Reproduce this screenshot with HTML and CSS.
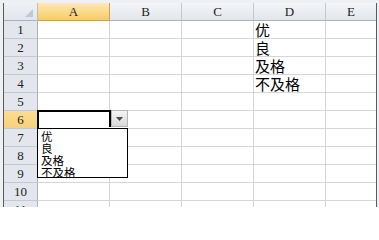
FILE: index.html
```html
<!DOCTYPE html>
<html lang="zh">
<head>
<meta charset="utf-8">
<title>Sheet</title>
<link rel="stylesheet" href="styles.css">
</head>
<body>
<div class="frame">
  <div class="grid">
    <div class="corner"><span class="tri"></span></div>
    <div class="ch active">A</div>
    <div class="ch">B</div>
    <div class="ch">C</div>
    <div class="ch">D</div>
    <div class="ch last">E</div>

    <div class="rh">1</div><div class="c"></div><div class="c"></div><div class="c"></div><div class="c txt">优</div><div class="c last"></div>
    <div class="rh">2</div><div class="c"></div><div class="c"></div><div class="c"></div><div class="c txt">良</div><div class="c last"></div>
    <div class="rh">3</div><div class="c"></div><div class="c"></div><div class="c"></div><div class="c txt">及格</div><div class="c last"></div>
    <div class="rh">4</div><div class="c"></div><div class="c"></div><div class="c"></div><div class="c txt">不及格</div><div class="c last"></div>
    <div class="rh">5</div><div class="c"></div><div class="c"></div><div class="c"></div><div class="c"></div><div class="c last"></div>
    <div class="rh active">6</div><div class="c"></div><div class="c"></div><div class="c"></div><div class="c"></div><div class="c last"></div>
    <div class="rh">7</div><div class="c"></div><div class="c"></div><div class="c"></div><div class="c"></div><div class="c last"></div>
    <div class="rh">8</div><div class="c"></div><div class="c"></div><div class="c"></div><div class="c"></div><div class="c last"></div>
    <div class="rh">9</div><div class="c"></div><div class="c"></div><div class="c"></div><div class="c"></div><div class="c last"></div>
    <div class="rh">10</div><div class="c"></div><div class="c"></div><div class="c"></div><div class="c"></div><div class="c last"></div>
    <div class="rh">11</div><div class="c"></div><div class="c"></div><div class="c"></div><div class="c"></div><div class="c last"></div>

    <div class="selection"></div>
    <div class="handle"></div>
    <div class="dd-btn"><svg width="7" height="4" viewBox="0 0 7 4"><path d="M0 0H7L3.5 4Z" fill="#4a4a4a"/></svg></div>
    <ul class="dd-list">
      <li>优</li>
      <li>良</li>
      <li>及格</li>
      <li>不及格</li>
    </ul>
  </div>
</div>
</body>
</html>
```

FILE: styles.css
```css
html, body {
  margin: 0;
  padding: 0;
  background: #ffffff;
}
body {
  width: 379px;
  height: 207px;
  overflow: hidden;
  font-family: "Noto Sans CJK SC", "Noto Sans", sans-serif;
}
.frame {
  padding: 3px 2px 0 3px;
  background: #eef0f3;
  height: 204px;
  overflow: hidden;
}
.grid {
  position: relative;
  display: grid;
  grid-template-columns: 34px 72px 72px 72px 72px 50px;
  grid-auto-rows: 18px;
  border-left: 1px solid #5a5a5a;
  border-right: 1px solid #5a5a5a;
  background: #ffffff;
}
.grid > div {
  box-sizing: border-box;
}
.corner {
  position: relative;
  background: linear-gradient(#eef1f5, #e2e6ec);
  border-right: 1px solid #b8bfc9;
  border-bottom: 1px solid #a9b2be;
}
.tri {
  position: absolute;
  right: 4px;
  bottom: 3px;
  width: 0;
  height: 0;
  border-left: 8px solid transparent;
  border-bottom: 8px solid #c3c8cf;
}
.ch {
  display: flex;
  align-items: center;
  justify-content: center;
  background: linear-gradient(#f3f5f8, #e2e6ec);
  border-right: 1px solid #c3c9d1;
  border-bottom: 1px solid #a9b2be;
  font-family: "Liberation Serif", serif;
  font-size: 13px;
  color: #222222;
}
.ch.active {
  background: linear-gradient(#fde9b0, #f7cc66);
  border-right-color: #c9a24f;
  border-bottom-color: #c9a24f;
}
.ch.last {
  border-right: none;
}
.rh {
  display: flex;
  align-items: center;
  justify-content: center;
  background: #e3e7ed;
  border-right: 1px solid #a9b2be;
  border-bottom: 1px solid #c3c9d1;
  font-family: "Liberation Serif", serif;
  font-size: 13px;
  color: #222222;
  padding-top: 1px;
}
.rh.active {
  background: linear-gradient(#fbdc92, #f8d17a);
}
.c {
  border-right: 1px solid #d6d6d6;
  border-bottom: 1px solid #d6d6d6;
}
.c.last {
  border-right: none;
}
.txt {
  display: flex;
  align-items: flex-end;
  padding-left: 1px;
  font-size: 15px;
  line-height: 16px;
  color: #000000;
  white-space: nowrap;
}
.selection {
  position: absolute;
  left: 33px;
  top: 107px;
  width: 74px;
  height: 22px;
  box-sizing: border-box;
  border: 2px solid #000000;
}
.handle {
  position: absolute;
  left: 103px;
  top: 124px;
  width: 4px;
  height: 4px;
  background: #000000;
  border: 1px solid #ffffff;
}
.dd-btn {
  position: absolute;
  left: 107px;
  top: 107px;
  width: 17px;
  height: 17px;
  box-sizing: border-box;
  display: flex;
  align-items: center;
  justify-content: center;
  background: linear-gradient(#f4f4f4, #d9d9d9);
  border: 1px solid #b4b4b4;
}
.dd-list {
  position: absolute;
  left: 33px;
  top: 125px;
  width: 91px;
  height: 50px;
  box-sizing: border-box;
  margin: 0;
  padding: 1px 0 0 3px;
  list-style: none;
  background: #ffffff;
  border: 1px solid #000000;
  font-size: 11.5px;
  line-height: 12px;
  color: #000000;
}
.dd-list li {
  height: 12px;
  overflow: visible;
  white-space: nowrap;
}
```
